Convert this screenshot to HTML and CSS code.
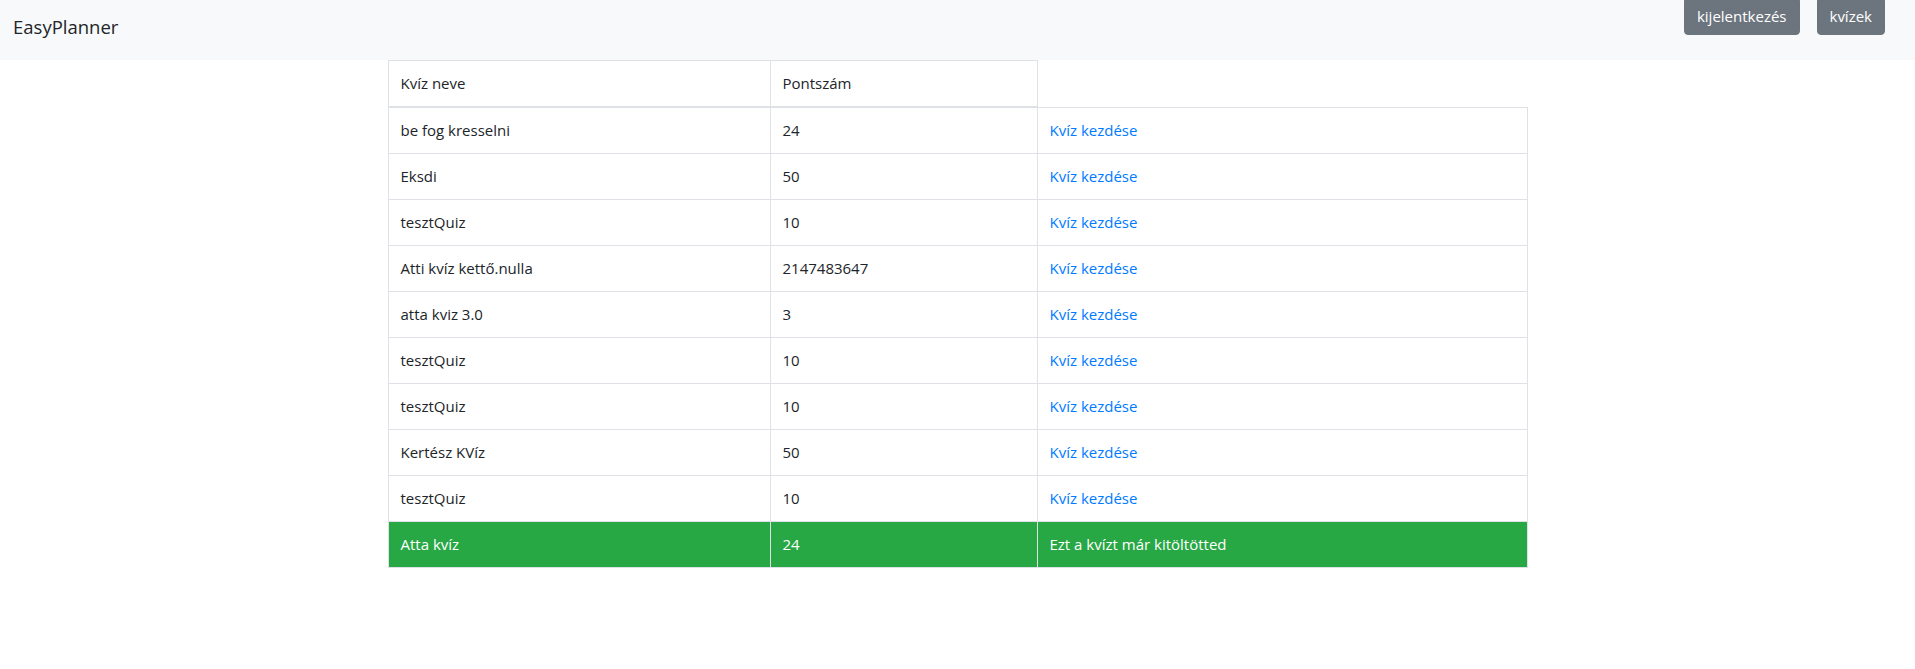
FILE: index.html
```html
<!DOCTYPE html>
<html lang="hu">
<head>
<meta charset="utf-8">
<title>EasyPlanner</title>
<link rel="stylesheet" href="styles.css">
</head>
<body>
<nav class="navbar">
  <span class="brand">EasyPlanner</span>
  <div class="nav-actions">
    <button class="btn">kijelentkezés</button>
    <button class="btn">kvízek</button>
  </div>
</nav>
<main class="container">
  <table class="quiz-table">
    <colgroup>
      <col class="c1"><col class="c2"><col class="c3">
    </colgroup>
    <thead>
      <tr><th>Kvíz neve</th><th>Pontszám</th></tr>
    </thead>
    <tbody>
      <tr><td>be fog kresselni</td><td>24</td><td><a href="#">Kvíz kezdése</a></td></tr>
      <tr><td>Eksdi</td><td>50</td><td><a href="#">Kvíz kezdése</a></td></tr>
      <tr><td>tesztQuiz</td><td>10</td><td><a href="#">Kvíz kezdése</a></td></tr>
      <tr><td>Atti kvíz kettő.nulla</td><td>2147483647</td><td><a href="#">Kvíz kezdése</a></td></tr>
      <tr><td>atta kviz 3.0</td><td>3</td><td><a href="#">Kvíz kezdése</a></td></tr>
      <tr><td>tesztQuiz</td><td>10</td><td><a href="#">Kvíz kezdése</a></td></tr>
      <tr><td>tesztQuiz</td><td>10</td><td><a href="#">Kvíz kezdése</a></td></tr>
      <tr><td>Kertész KVíz</td><td>50</td><td><a href="#">Kvíz kezdése</a></td></tr>
      <tr><td>tesztQuiz</td><td>10</td><td><a href="#">Kvíz kezdése</a></td></tr>
      <tr class="done"><td>Atta kvíz</td><td>24</td><td>Ezt a kvízt már kitöltötted</td></tr>
    </tbody>
  </table>
</main>
</body>
</html>
```
FILE: styles.css
```css
* { box-sizing: border-box; }
html, body { margin: 0; padding: 0; }
body {
  font-family: "Open Sans", "Noto Sans", "Liberation Sans", sans-serif;
  font-size: 15px;
  line-height: 21px;
  color: #212529;
  background: #fff;
}
.navbar {
  height: 60px;
  background: #f8f9fa;
  display: flex;
  justify-content: space-between;
  align-items: center;
  padding: 0 30px 0 13px;
}
.brand {
  font-size: 18.5px;
  line-height: 28px;
  color: #212529;
  margin-top: -6px;
}
.nav-actions {
  align-self: flex-start;
  display: flex;
  gap: 17px;
  margin-top: -3px;
}
.btn {
  font-family: inherit;
  font-size: 15px;
  line-height: 24px;
  padding: 6px 12px;
  color: #fff;
  background: #6c757d;
  border: 1px solid #6c757d;
  border-radius: 4px;
  cursor: pointer;
}
.container {
  width: 1140px;
  margin: 0 auto;
}
.quiz-table {
  width: 100%;
  border-collapse: collapse;
  table-layout: fixed;
}
.c1 { width: 382px; }
.c2 { width: 267px; }
.quiz-table th,
.quiz-table td {
  padding: 12px 12px;
  border: 1px solid #dee2e6;
  text-align: left;
  font-weight: 400;
  vertical-align: top;
  white-space: nowrap;
}
.quiz-table thead th {
  border-bottom: 2px solid #dee2e6;
}
.quiz-table a {
  color: #007bff;
  text-decoration: none;
}
.quiz-table tr.done td {
  background: #28a745;
  color: #fff;
}
```
